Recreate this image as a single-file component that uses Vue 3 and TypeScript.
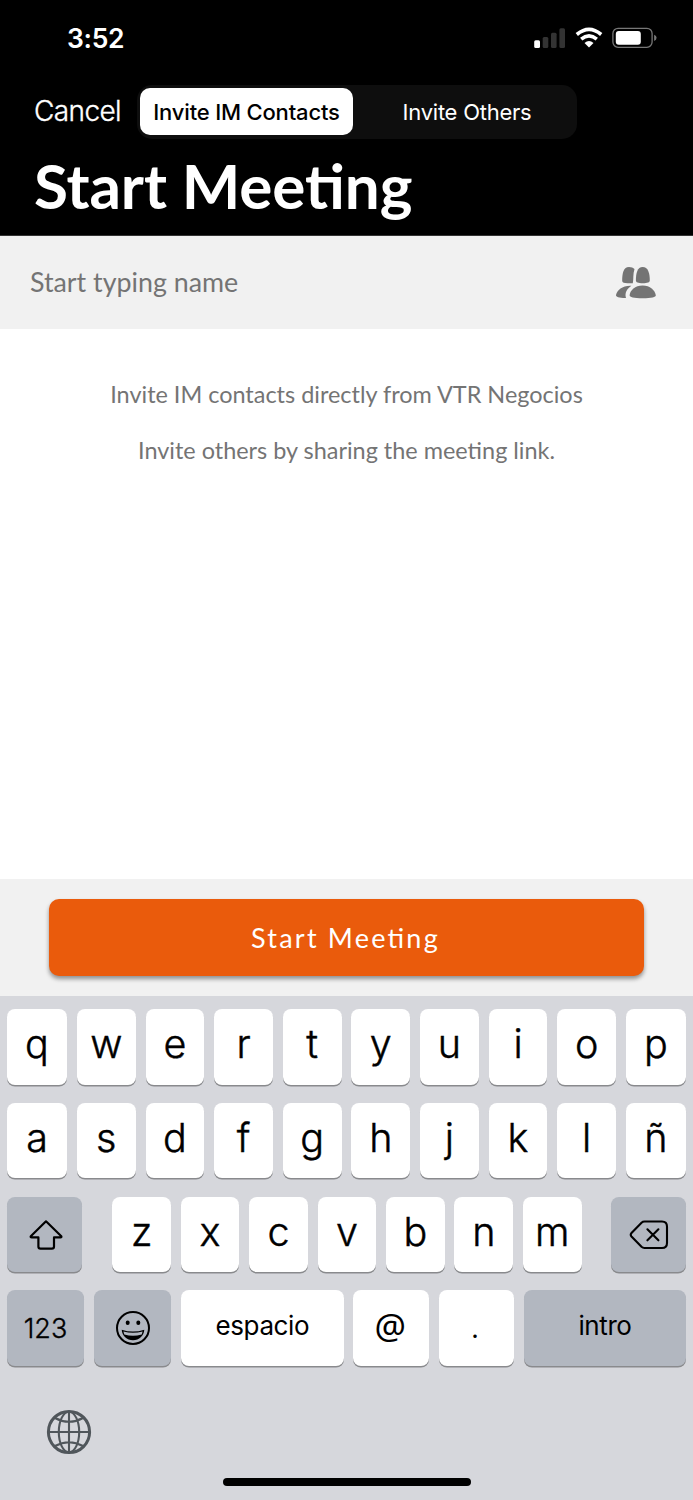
<script setup lang="ts">
import { ref } from 'vue'

type Tab = 'im' | 'others'

const activeTab = ref<Tab>('im')
const tabs: { id: Tab; label: string }[] = [
  { id: 'im', label: 'Invite IM Contacts' },
  { id: 'others', label: 'Invite Others' },
]
const topRow = [...'qwertyuiop']
const homeRow = [...'asdfghjklñ']
const bottomRow = [...'zxcvbnm']
</script>

<template>
  <main class="phone">
    <header class="header">
      <div class="status">
        <span class="time">3:52</span>
        <svg class="status-icons" width="124" height="24" viewBox="0 0 124 24">
          <rect x="1.2" y="14.3" width="5.8" height="7.7" rx="1.5" fill="#fff" />
          <g fill="#333">
            <rect x="9.7" y="11" width="5.6" height="11" rx="1.5" />
            <rect x="18" y="6.7" width="5.6" height="15.3" rx="1.5" />
            <rect x="26.4" y="2.2" width="5.6" height="19.8" rx="1.5" />
          </g>
          <g fill="none" stroke="#fff">
            <path d="M43.8 8.5Q56 -1.8 68.2 8.5" stroke-width="3.6" />
            <path d="M48.2 13.1Q56 6.7 63.8 13.1" stroke-width="3.6" />
          </g>
          <path d="M51.5 16.9Q56 13.3 60.5 16.9L56 21.6Z" fill="#fff" />
          <rect x="79.9" y="2.3" width="39.2" height="19" rx="5.2" fill="none" stroke="#777" stroke-width="1.3" />
          <rect x="82.8" y="5" width="25" height="13.8" rx="3" fill="#fff" />
          <path d="M121.1 8.7Q123.6 9.6 123.6 11.8T121.1 15Z" fill="#777" />
        </svg>
      </div>
      <nav class="nav">
        <button class="cancel">Cancel</button>
        <div class="segments">
          <button
            v-for="tab in tabs"
            :key="tab.id"
            class="segment"
            :class="[tab.id, { active: activeTab === tab.id }]"
            @click="activeTab = tab.id"
          >
            {{ tab.label }}
          </button>
        </div>
      </nav>
      <h1 class="title">Start Meeting</h1>
    </header>

    <section class="search">
      <span class="placeholder">Start typing name</span>
      <svg width="42" height="34" viewBox="0 0 42 34" fill="#747474">
        <path d="M14 1C8.5 1 7.2 7 7.2 15C7.2 16.8 9.3 17.2 12.5 17.2H17.8C18.7 13 17.8 8 19.5 3C18.3 1.7 16.3 1 14 1Z" />
        <path d="M27.7 1C22.4 1 20.9 7 20.9 14.3C20.9 16.7 23 17.2 27.7 17.2S34.8 16.7 34.8 14.3C34.8 7 33 1 27.7 1Z" />
        <path d="M16.4 19.7C7.5 19.3 2.2 23.8 1 29C.7 31 4.5 32.1 11 32C9.5 26.5 12 22.7 16.4 19.7Z" />
        <path d="M27.6 19.5C20 19.5 15.2 24.2 14.6 29.2C14.6 31.3 18.6 32.2 27.6 32.2S40.9 31.3 40.8 29.2C39.8 24.2 35.2 19.5 27.6 19.5Z" />
      </svg>
    </section>

    <section class="message">
      <p class="hint">Invite IM contacts directly from VTR Negocios</p>
      <p class="hint">Invite others by sharing the meeting link.</p>
    </section>

    <section class="action">
      <button class="start"><span class="start-label">Start Meeting</span></button>
    </section>

    <section class="keyboard">
      <div class="row letters">
        <button v-for="letter in topRow" :key="letter" class="key"><span>{{ letter }}</span></button>
      </div>
      <div class="row letters">
        <button v-for="letter in homeRow" :key="letter" class="key"><span>{{ letter }}</span></button>
      </div>
      <div class="row shift-row">
        <button class="key dark">
          <svg width="36" height="32" viewBox="0 0 36 32" fill="none" stroke="#000" stroke-width="2.2" stroke-linejoin="round">
            <path d="M18 2.3L33.3 17.2Q33.8 18.4 32.5 18.4H26V27.6Q26 29.7 23.9 29.7H12.5Q10.4 29.7 10.4 27.6V18.4H3.7Q2.2 18.4 2.8 17.2Z" />
          </svg>
        </button>
        <div class="bottom-letters">
          <button v-for="letter in bottomRow" :key="letter" class="key"><span>{{ letter }}</span></button>
        </div>
        <button class="key dark">
          <svg width="40" height="32" viewBox="0 0 40 32" fill="none" stroke="#000" stroke-width="2.1" stroke-linecap="round" stroke-linejoin="round">
            <path d="M15.5 2.5H33Q38 2.5 38 7.5V24Q38 29 33 29H15.5Q13.8 29 12.5 27.8L2.5 17.5Q1 15.8 2.5 14L12.5 3.7Q13.8 2.5 15.5 2.5Z" />
            <path d="M18.4 10.3L29.4 21.3M29.4 10.3L18.4 21.3" />
          </svg>
        </button>
      </div>
      <div class="row function-row">
        <button class="key dark numbers">123</button>
        <button class="key dark emoji">
          <svg width="36" height="36" viewBox="0 0 36 36">
            <circle cx="18" cy="18" r="16" fill="none" stroke="#000" stroke-width="2" />
            <ellipse cx="12.7" cy="12.7" rx="2" ry="2.3" />
            <ellipse cx="23.3" cy="12.7" rx="2" ry="2.3" />
            <path d="M6.7 19.7Q18 23.5 29.3 19.7C28.8 26 24.2 30.2 18 30.2S7.2 26 6.7 19.7Z" />
            <path d="M8.4 21.5Q18 24 27.6 21.5L26.7 24.6Q18 27 9.3 24.6Z" fill="#b2b7c0" />
          </svg>
        </button>
        <button class="key word">espacio</button>
        <button class="key at">@</button>
        <button class="key dot">.</button>
        <button class="key dark word intro">intro</button>
      </div>
      <svg class="globe" width="46" height="46" viewBox="0 0 46 46" fill="none" stroke="#50565b" stroke-width="2.1">
        <circle cx="23" cy="23" r="20.6" stroke-width="3" />
        <path d="M2 23H44M23 2V44M9 9Q23 16.5 37 9M9 37Q23 29.5 37 37" />
        <ellipse cx="23" cy="23" rx="10.2" ry="20.3" />
      </svg>
      <div class="home-indicator"></div>
    </section>
  </main>
</template>

<style>
body {
  margin: 0;
}
</style>

<style scoped>
.phone {
  width: 693px;
  height: 1500px;
  overflow: hidden;
  display: flex;
  flex-direction: column;
  background: #fff;
  font-family: Inter, "Liberation Sans", sans-serif;
}
button {
  margin: 0;
  padding: 0;
  border: 0;
  background: none;
  font-family: inherit;
  color: inherit;
}
svg {
  display: block;
  flex: none;
}
.header {
  box-sizing: border-box;
  height: 236px;
  border-bottom: 1px solid #333;
  background: #000;
  color: #fff;
}
.status {
  height: 85px;
  box-sizing: border-box;
  padding: 26px 36px 0 67px;
  display: flex;
  justify-content: space-between;
}
.time {
  font-size: 26.5px;
  line-height: 25px;
  font-weight: 600;
  letter-spacing: -0.3px;
}
.nav {
  height: 54px;
  display: flex;
  padding-left: 34px;
}
.cancel {
  width: 103px;
  height: 52px;
  text-align: left;
  font-size: 28px;
  line-height: 52px;
  font-weight: 300;
  letter-spacing: -0.6px;
  -webkit-text-stroke: 0.35px currentColor;
}
.segments {
  box-sizing: border-box;
  width: 440px;
  padding: 3px;
  display: flex;
  border-radius: 15px;
  background: #0e0e0e;
}
.segment {
  height: 47px;
  border-radius: 10px;
  font-size: 22px;
  letter-spacing: -0.18px;
  white-space: nowrap;
}
.segment.im {
  width: 213px;
}
.segment.others {
  flex: 1;
  padding-left: 7px;
  letter-spacing: -0.25px;
}
.segment.active {
  background: #fff;
  color: #000;
  font-weight: 500;
}
.title {
  margin: 6px 0 0 34px;
  font: 700 62px/80px Lato, sans-serif;
  letter-spacing: -0.1px;
  font-feature-settings: "liga" 1;
  white-space: nowrap;
}
.search {
  height: 93px;
  box-sizing: border-box;
  padding: 0 36px 0 30px;
  display: flex;
  align-items: center;
  justify-content: space-between;
  background: #f1f1f1;
  color: #747474;
}
.placeholder {
  margin-top: -1px;
  font: 26.8px/40px Lato, sans-serif;
}
.message {
  height: 550px;
  box-sizing: border-box;
  padding-top: 50px;
  text-align: center;
  color: #747474;
}
.hint {
  margin: 0 0 26px;
  font: 23.45px/30px Lato, sans-serif;
}
.action {
  height: 117px;
  box-sizing: border-box;
  padding: 20px 49px;
  background: #f1f1f1;
}
.start {
  display: block;
  width: 100%;
  height: 77px;
  border-radius: 10px;
  background: #ea5b0c;
  box-shadow: 0 3px 4px rgba(0, 0, 0, 0.4);
  color: #fff;
}
.start-label {
  margin-right: 2px;
  font: 27px/40px Lato, sans-serif;
  letter-spacing: 2.2px;
  font-feature-settings: "liga" 1;
}
.keyboard {
  flex: 1;
  padding: 13px 7px 0;
  background: #d6d7dc;
  color: #000;
}
.row {
  display: grid;
  height: 75.5px;
  margin-bottom: 18.3px;
}
.letters {
  grid-template-columns: 60px repeat(8, 58.7px) 60px;
  justify-content: space-between;
}
.shift-row {
  grid-template-columns: 75px 470.4px 75px;
  justify-content: space-between;
}
.bottom-letters {
  display: grid;
  grid-template-columns: repeat(7, 58.7px);
  justify-content: space-between;
  padding-left: 1px;
}
.shift-row svg {
  margin: 2px 0 0 2px;
}
.function-row {
  grid-template-columns: 77px 77.5px 162.5px 75.5px 75.5px 162px;
  justify-content: space-between;
}
.key {
  height: 75.5px;
  display: flex;
  align-items: center;
  justify-content: center;
  border-radius: 8px;
  background: #fff;
  box-shadow: 0 1.5px 0 #898a8d;
  font-size: 39.5px;
  font-weight: 300;
  -webkit-text-stroke: 0.45px currentColor;
}
.key span {
  line-height: 48px;
  padding-bottom: 5px;
}
.dark {
  background: #b2b7c0;
}
.numbers {
  font-size: 27px;
  -webkit-text-stroke-width: 0.35px;
}
.word {
  font-size: 26px;
  font-weight: 400;
  letter-spacing: -0.4px;
  padding-bottom: 5px;
  box-sizing: border-box;
  -webkit-text-stroke-width: 0;
}
.at {
  font-family: "Noto Sans", sans-serif;
  font-size: 35px;
  font-weight: 400;
  padding: 0 2px 5px 0;
  box-sizing: border-box;
  -webkit-text-stroke-width: 0;
}
.dot {
  font-size: 26px;
  font-weight: 400;
  box-sizing: border-box;
  padding-right: 3px;
  -webkit-text-stroke-width: 0;
}
.globe {
  margin: 43px 0 0 39px;
}
.home-indicator {
  width: 248px;
  height: 8px;
  margin: 23px auto 0;
  border-radius: 5px;
  background: #000;
}
</style>
